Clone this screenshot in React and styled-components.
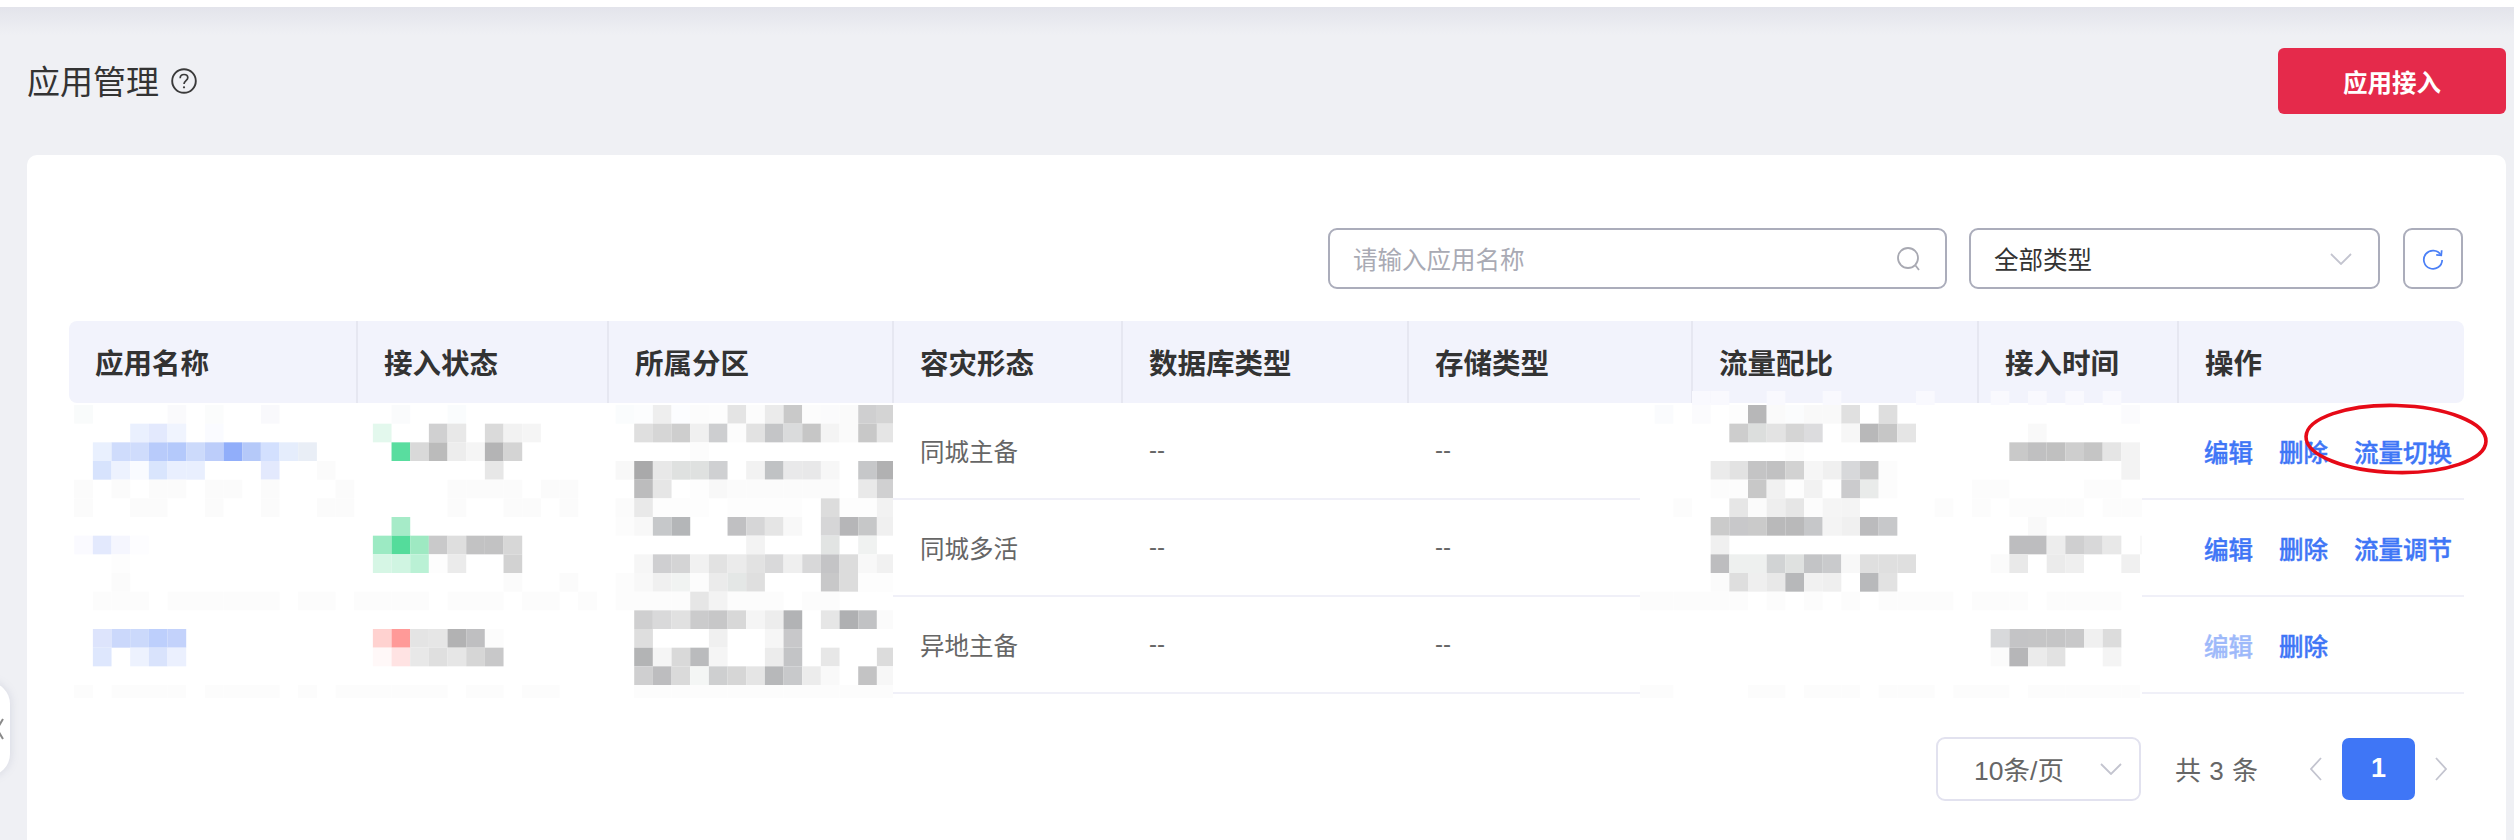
import React from "react";
import styled, { createGlobalStyle } from "styled-components";

const Global = createGlobalStyle`
  html, body { margin: 0; padding: 0; background: #eff0f4; }
  body { font-family: "Noto Sans CJK SC", "Liberation Sans", sans-serif; }
  * { box-sizing: border-box; }
`;

const Page = styled.div`
  position: relative;
  width: 2514px;
  height: 840px;
  overflow: hidden;
  display: flex;
  flex-direction: column;
  background: #eff0f4;
`;
const TopStrip = styled.div`
  height: 7px;
  flex: none;
  background: #fff;
`;
const Main = styled.div`
  flex: 1;
  display: flex;
  flex-direction: column;
  padding: 41px 8px 0 27px;
  background: linear-gradient(#e3e4eb 0, #eff0f4 28px);
`;
const TitleBar = styled.div`
  display: flex;
  align-items: center;
  justify-content: space-between;
  height: 66px;
  margin-bottom: 41px;
  flex: none;
`;
const TitleGroup = styled.div`
  display: flex;
  align-items: center;
  gap: 12px;
`;
const Title = styled.h1`
  margin: -2px 0 0;
  font-size: 33px;
  line-height: 1;
  font-weight: 400;
  color: #333;
`;
const PrimaryButton = styled.button`
  width: 228px;
  height: 66px;
  border: 0;
  border-radius: 6px;
  background: #e52a4b;
  color: #fff;
  font: 700 24.5px "Noto Sans CJK SC", sans-serif;
`;
const Card = styled.section`
  flex: 1;
  background: #fff;
  border-radius: 10px 10px 0 0;
  padding: 73px 42px 0;
`;
const FilterBar = styled.div`
  display: flex;
  justify-content: flex-end;
  align-items: center;
  height: 61px;
  margin-bottom: 32px;
  padding-right: 1px;
`;
const Field = styled.div`
  display: flex;
  align-items: center;
  justify-content: space-between;
  width: ${(p) => p.$width}px;
  height: 61px;
  margin-right: ${(p) => p.$gap}px;
  padding: 0 ${(p) => p.$padRight}px 0 23px;
  border: 2px solid #abadbb;
  border-radius: 9px;
  font-size: 24.5px;
  color: ${(p) => (p.$placeholder ? "#a9aab4" : "#333")};
  background: #fff;
`;
const IconButton = styled.div`
  width: 60px;
  height: 61px;
  border: 2px solid #abadbb;
  border-radius: 9px;
  display: flex;
  align-items: center;
  justify-content: center;
`;
const TableWrap = styled.div`
  position: relative;
`;
const COLS = "287px 251px 285px 229px 286px 284px 286px 200px 287px";
const HeadRow = styled.div`
  display: grid;
  grid-template-columns: ${COLS};
  height: 81.5px;
  background: #f2f3fc;
  border-radius: 8px;
`;
const HeadCell = styled.div`
  display: flex;
  align-items: center;
  padding-left: 26px;
  font-size: 28.5px;
  font-weight: 700;
  color: #333;
  border-left: ${(p) => (p.$first ? "0" : "2px solid #e6e7f1")};
`;
const BodyRow = styled.div`
  display: grid;
  grid-template-columns: ${COLS};
  height: 97.2px;
  border-bottom: 2px solid #f0f0f8;
`;
const Cell = styled.div`
  display: flex;
  align-items: center;
  padding-left: 28px;
  font-size: 24.5px;
  color: #666;
`;
const Dash = styled.span`
  font-family: "Liberation Sans", sans-serif;
  font-size: 24px;
  color: #666;
`;
const Ops = styled.div`
  position: relative;
  display: flex;
  align-items: center;
  gap: 26px;
  padding: 2px 0 0 27px;
`;
const OpLink = styled.a`
  font-size: 24.5px;
  font-weight: 500;
  color: #3f76f6;
  -webkit-text-stroke: 0.4px #3f76f6;
  opacity: ${(p) => (p.$disabled ? 0.5 : 1)};
`;
const Ring = styled.svg`
  position: absolute;
  left: 124px;
  top: 0;
  width: 190px;
  height: 74px;
  overflow: visible;
`;
const MosaicSvg = styled.svg`
  position: absolute;
  left: ${(p) => p.$left}px;
  top: ${(p) => p.$top}px;
  pointer-events: none;
`;
const Pager = styled.div`
  display: flex;
  align-items: center;
  justify-content: flex-end;
  height: 64px;
  margin-top: 42.9px;
  padding-right: 17px;
`;
const PageSize = styled.div`
  display: flex;
  align-items: center;
  justify-content: space-between;
  width: 205px;
  height: 64px;
  padding: 0 17px 0 36px;
  border: 2px solid #e2e2ef;
  border-radius: 9px;
  font: 26.5px "Liberation Sans", "Noto Sans CJK SC", sans-serif;
  color: #666;
`;
const Total = styled.div`
  margin: 0 52px 0 34px;
  font: 26px "Liberation Sans", "Noto Sans CJK SC", sans-serif;
  color: #666;
  word-spacing: 1px;
`;
const PageNumber = styled.div`
  width: 73px;
  height: 62px;
  margin: 0 20px;
  border-radius: 7px;
  background: #3f76f6;
  color: #fff;
  font: 700 27px "Liberation Sans", sans-serif;
  display: flex;
  align-items: center;
  justify-content: center;
`;
const SideTab = styled.div`
  position: absolute;
  left: -30px;
  top: 682px;
  width: 40px;
  height: 94px;
  background: #fff;
  border-radius: 0 22px 22px 0;
  box-shadow: 0 0 10px rgba(120, 125, 160, 0.22);
  display: flex;
  align-items: center;
  justify-content: flex-end;
`;
const TabArrow = styled.svg`
  margin-right: 6px;
`;

const Chevron = ({ dir = "down", w = 22, h = 12, color = "#c3c4cf", sw = 1.8 }) => {
  if (dir === "down")
    return (
      <svg width={w} height={h} viewBox="0 0 22 12" fill="none">
        <path d="M1 1 L11 11 L21 1" stroke={color} strokeWidth={sw} />
      </svg>
    );
  const d = dir === "left" ? "M11 1 L1 12 L11 23" : "M1 1 L11 12 L1 23";
  return (
    <svg width={12} height={24} viewBox="0 0 12 24" fill="none">
      <path d={d} stroke={color} strokeWidth={sw} />
    </svg>
  );
};
const HelpIcon = () => (
  <svg width="26" height="26" viewBox="0 0 26 26" fill="none" stroke="#3a3a3a" strokeWidth="1.9">
    <circle cx="13" cy="13" r="11.8" />
    <path d="M9.2 10.2c0-2.3 1.7-3.7 3.8-3.7s3.8 1.3 3.8 3.3c0 2.8-3.8 3-3.8 6.2" strokeWidth="1.7" />
    <circle cx="13" cy="19.3" r="1.1" fill="#3a3a3a" stroke="none" />
  </svg>
);
const SearchIcon = () => (
  <svg width="26" height="26" viewBox="0 0 26 26" fill="none" stroke="#a8a9b2" strokeWidth="1.8">
    <circle cx="12" cy="12" r="10" />
    <path d="M19.5 19.5 L23 24" />
  </svg>
);
const RefreshIcon = () => (
  <svg width="22" height="22" viewBox="0 0 24 24" fill="none" stroke="#4a7ff6" strokeWidth="1.9">
    <path d="M20.5 7.5A10 10 0 1 0 22 13" />
    <path d="M21.5 2.5 L21 8 L15.5 7.6" />
  </svg>
);

const STEP = 18.667;
const ROW0 = 405;
const parse = (rows) =>
  Object.entries(rows).flatMap(([r, spec]) =>
    spec.split(" ").flatMap((tok) => {
      const [cols, hex] = tok.split(":");
      const fill = "#" + (hex.length === 2 ? hex + hex + hex : hex);
      return cols.split(",").map((c) => ({ r: +r, c: +c, fill }));
    })
  );

const LEFT_ROWS = {
  0: "0:f9fbfb 5:fafafc 7:fbfcfc 10:f9f9fc 17:fafbfc 20:fafcfd 29:fafcfd 30:fcfdfe 31:ee 32:fcfdff 33:fc 34:fd 35:e4 36:fc 37:eb 38:c9 39:fc 40:fbfbfc 41:fa 42:cfcfd0 43:d4",
  1: "3:eaf0fe 4:e3e9fd 5:f0f4fe 7:fafbff 16:e3f8ed 19:d0d0d1 20:e8 22:da 23:f2 24:f5 30:df 31:d6 32:ce 33:f0 34:cdced0 35:fc 36:e2 37:c4c5c7 38:dadbdc 39:c6 40:f4 41:fa 42:c8 43:e5",
  2: "1:e9f0fe 2,3:cfdcfc 4:b8cbfb 5:b4c9fb 6:ccdafb 7:bccdfa 8:91aefa 9:b5c9f9 10:d3e0fe 11:e5edfc 12:e9eef6 17:59dd9f 18:d9 19:bb 20:ed 21:f5 22:b4b4b5 23:d4 33:fc",
  3: "1:d7e3fd 2:edf2fe 3:f9fbff 4:d9e5fd 5,6:e9effe 10:e3e9fd 13:fb 22:e7 29:f8 30:a9a9aa 31:e8 32,33:dfe1e0 34:cfd0d2 36:f2 37:c0c2c4 38:e9e9ea 39:e8e8e9 40:f7 42:c6c7c9 43:b1b1b2",
  4: "0,2,4,5,7,8,10,14,20,21,22,23,25,26:fb 30:bcbcbd 31:e6 33:fd 34:f8 35,36,37,38,39,40:fb 42:e9 43:d0d0d1",
  5: "0,3,4,7,10,13,14,20,23,24,26,29:fb 30:e9 31,32,33,35,36,37,38,41,42:fd 40:dc 43:f2",
  6: "17:a6ebc8 29:fc 30:f8 31:c6c8ca 32:b4b6b8 35:c0c0c2 36:d6d6d7 37:e5 38:f8 40:d6d6d7 41:b6b6b8 42:c6c7c8 43:f0",
  7: "0:fafaff 1:e3e9fd 2:f5f6fe 3:fdfdff 16:9ceac3 17:54dc9b 18:9ee9c2 19:c9c9ca 20:de 21,22:c2c2c3 23:d7 36:f3 40:e2e4e3 42:f0f2f1",
  8: "2:fd 16:d6f6e5 17:d0f5e2 18:baf1d5 19:fd 20:eb 23:d2 30:f6 31:cfcfd1 32:d4d4d5 33:f1 34:e2 35:eb 36:e2 37:d9d9da 38:ef 39:d8d8d9 40:c4c4c6 41:dc 42:f8 43:f1",
  9: "2,23,26:fb 29:fc 30:f8 31:f0 32:f1f3f2 33:fc 34:eb 35:e4e7e6 36:df 40:c8c8c9 41:dc 42,43:fd",
  10: "1,2,3,5,6,7,8,9,10,12,13,15,16,17,18,20,21,22,24,25,27,29,30,31,32,35,36,37,39,40:fc 33:e6 34:f3",
  11: "30:cfcfd0 31:d9d9da 32:e1 33:cbcbcc 34:c7c7c8 35:d8 36:f5 37:ed 38:b2b3b5 40:e6 41:afb0b2 42:c1c2c4 43:fb",
  12: "1:dde4fc 2:cbd8fb 3:cbd9fb 4:bdcffc 5:c3d2fb 16:ffd2d0 17:ff9a98 18:e4 19:e6 20:b2b2b3 21:bfbfc1 22:fc 30:de 34:f0 37:f6 38:c8c8ca",
  13: "1:dee7fd 3:edf2fe 4:d9e3fc 5:ebf0fe 16:fff8f8 17:ffe3e3 18:e8 19:df 20:e6 21:d6 22:c8c8c9 30:b3b4b5 31:f5 32:d9 33:babbbd 34:f5 37:ec 38:c3c4c6 40:e7 43:dc",
  14: "30:cfcfd0 31:bdbdbf 32:da 33:f4f6f5 34:cecfd0 35:d6 36:e5 37:b7b8ba 38:c8c9cb 39:ec 40:f9 42:c3c3c4 43:f7",
  15: "0,2,3,4,5,7,8,9,10,12,14,15,16,17,18,19,21,22,24,25,30,31,32,33,34,35,36,37,38,39,40,41,42,43:fc",
};
const RIGHT_ROWS = {
  "-1": "3,4,7,10,15,19,21,23,25:f9f9fe",
  0: "1:fafbfd 3:fbfbfd 5:fd 6:b7b7b8 7:fa 8:fbfcfd 9,10:f9 11:e0 13:de 26:fbfbfd",
  1: "5:cd 6:dcdedd 7:e3 8:d5 9:dcdcde 11:f7 12:b8b8b9 13:c6 14:e5 21:f9",
  2: "8:fc 20:c9 21:c0c0c1 22:c0 23:ce 24:c5 25:e5 26:f3",
  3: "4:eb 5:e2 6:c4c4c5 7:c1c1c2 8:d2 9:f6 10:f0 11:d7d8da 12:c6c6c7 13:fc 26:f3",
  4: "4,5:fc 6:c8 7:f1 8:fd 9:f2 10:fe 11:cbcbcd 12:e9ebea 13,18,19,24,25:fc",
  5: "2:fc 5:e6 6:fb 7:ee 8:e6 9:fc 10:f5 11:f4 16,18,20,21,22,23,25,26,27:fc",
  6: "4:cb 5:c8c8ca 6:ca 7,8:b9b9ba 9:c6c7c9 10:f4 11:f0 12:bbbbbd 13:c7c8ca 21:f9",
  7: "4:f0 20,21:bdbdbf 22:ed 23:cfcfd0 24:d8d8d9 25:e8 27:f8",
  8: "4:bdbdbf 5,6:eef0ef 7:d1d3d4 8:dfe1e0 9:c3c4c6 10:c9cacc 11:f8 12,13,14:df 19:fb 20:e9 22:eb 23:ef 26:f0",
  9: "4:fb 5:de 6:ef 7:e8 8:b7b8ba 9:f1 10:ef 12:b8b9bb 13:e2",
  10: "0,1,2,3,4,5,7,9,11,13,14,15,16,18,19,20,22,23,24,25:fc",
  12: "19:d8d9db 20:c4c4c6 21,22:c5c5c6 23:c8c8c9 24:f0 25:dc",
  13: "19:fb 20:b6b6b8 21:eb 22:e2 25:f4",
  15: "0,1,6,7,9,10,11,13,14,15,17,18,19,21,22,23,24,25,26:fc",
};

const Mosaic = ({ rows, x, width, top, origin }) => (
  <MosaicSvg
    $left={x - 69}
    $top={top - 321}
    width={width}
    height={698 - top}
    viewBox={`${x} ${top} ${width} ${698 - top}`}
  >
    <rect x={x} y={ROW0} width={width} height={698 - ROW0} fill="#fff" />
    {parse(rows).map(({ r, c, fill }) => (
      <rect
        key={`${r}-${c}`}
        x={origin + c * STEP}
        y={ROW0 + r * STEP}
        width={STEP}
        height={STEP}
        fill={fill}
      />
    ))}
  </MosaicSvg>
);

const HEADERS = ["应用名称", "接入状态", "所属分区", "容灾形态", "数据库类型", "存储类型", "流量配比", "接入时间", "操作"];
const ROWS = [
  { mode: "同城主备", ops: [["编辑"], ["删除"], ["流量切换"]], ring: true },
  { mode: "同城多活", ops: [["编辑"], ["删除"], ["流量调节"]] },
  { mode: "异地主备", ops: [["编辑", true], ["删除"]] },
];

export default function App() {
  return (
    <Page>
      <Global />
      <TopStrip />
      <Main>
        <TitleBar>
          <TitleGroup>
            <Title>应用管理</Title>
            <HelpIcon />
          </TitleGroup>
          <PrimaryButton>应用接入</PrimaryButton>
        </TitleBar>
        <Card>
          <FilterBar>
            <Field $width={619} $gap={22} $padRight={23} $placeholder>
              请输入应用名称
              <SearchIcon />
            </Field>
            <Field $width={411} $gap={23} $padRight={26}>
              全部类型
              <Chevron />
            </Field>
            <IconButton>
              <RefreshIcon />
            </IconButton>
          </FilterBar>
          <TableWrap>
            <HeadRow>
              {HEADERS.map((h, i) => (
                <HeadCell key={h} $first={i === 0}>
                  {h}
                </HeadCell>
              ))}
            </HeadRow>
            {ROWS.map((row) => (
              <BodyRow key={row.mode}>
                <Cell />
                <Cell />
                <Cell />
                <Cell>{row.mode}</Cell>
                <Cell>
                  <Dash>--</Dash>
                </Cell>
                <Cell>
                  <Dash>--</Dash>
                </Cell>
                <Cell />
                <Cell />
                <Ops>
                  {row.ops.map(([label, disabled]) => (
                    <OpLink key={label} $disabled={disabled}>
                      {label}
                    </OpLink>
                  ))}
                  {row.ring && (
                    <Ring viewBox="0 0 190 74" fill="none">
                      <ellipse cx="95" cy="36" rx="90" ry="33.5" stroke="#e60a17" strokeWidth="3.6" transform="rotate(1.5 95 36)" />
                    </Ring>
                  )}
                </Ops>
              </BodyRow>
            ))}
            <Mosaic rows={LEFT_ROWS} x={60} width={833} top={405} origin={74.2} />
            <Mosaic rows={RIGHT_ROWS} x={1640} width={502} top={391} origin={1636} />
          </TableWrap>
          <Pager>
            <PageSize>
              10条/页
              <Chevron />
            </PageSize>
            <Total>共 3 条</Total>
            <Chevron dir="left" />
            <PageNumber>1</PageNumber>
            <Chevron dir="right" />
          </Pager>
        </Card>
      </Main>
      <SideTab>
        <TabArrow width="8" height="22" viewBox="0 0 8 22" fill="none">
          <path d="M7 1 L1 11 L7 21" stroke="#8a8a8a" strokeWidth="2" />
        </TabArrow>
      </SideTab>
    </Page>
  );
}
